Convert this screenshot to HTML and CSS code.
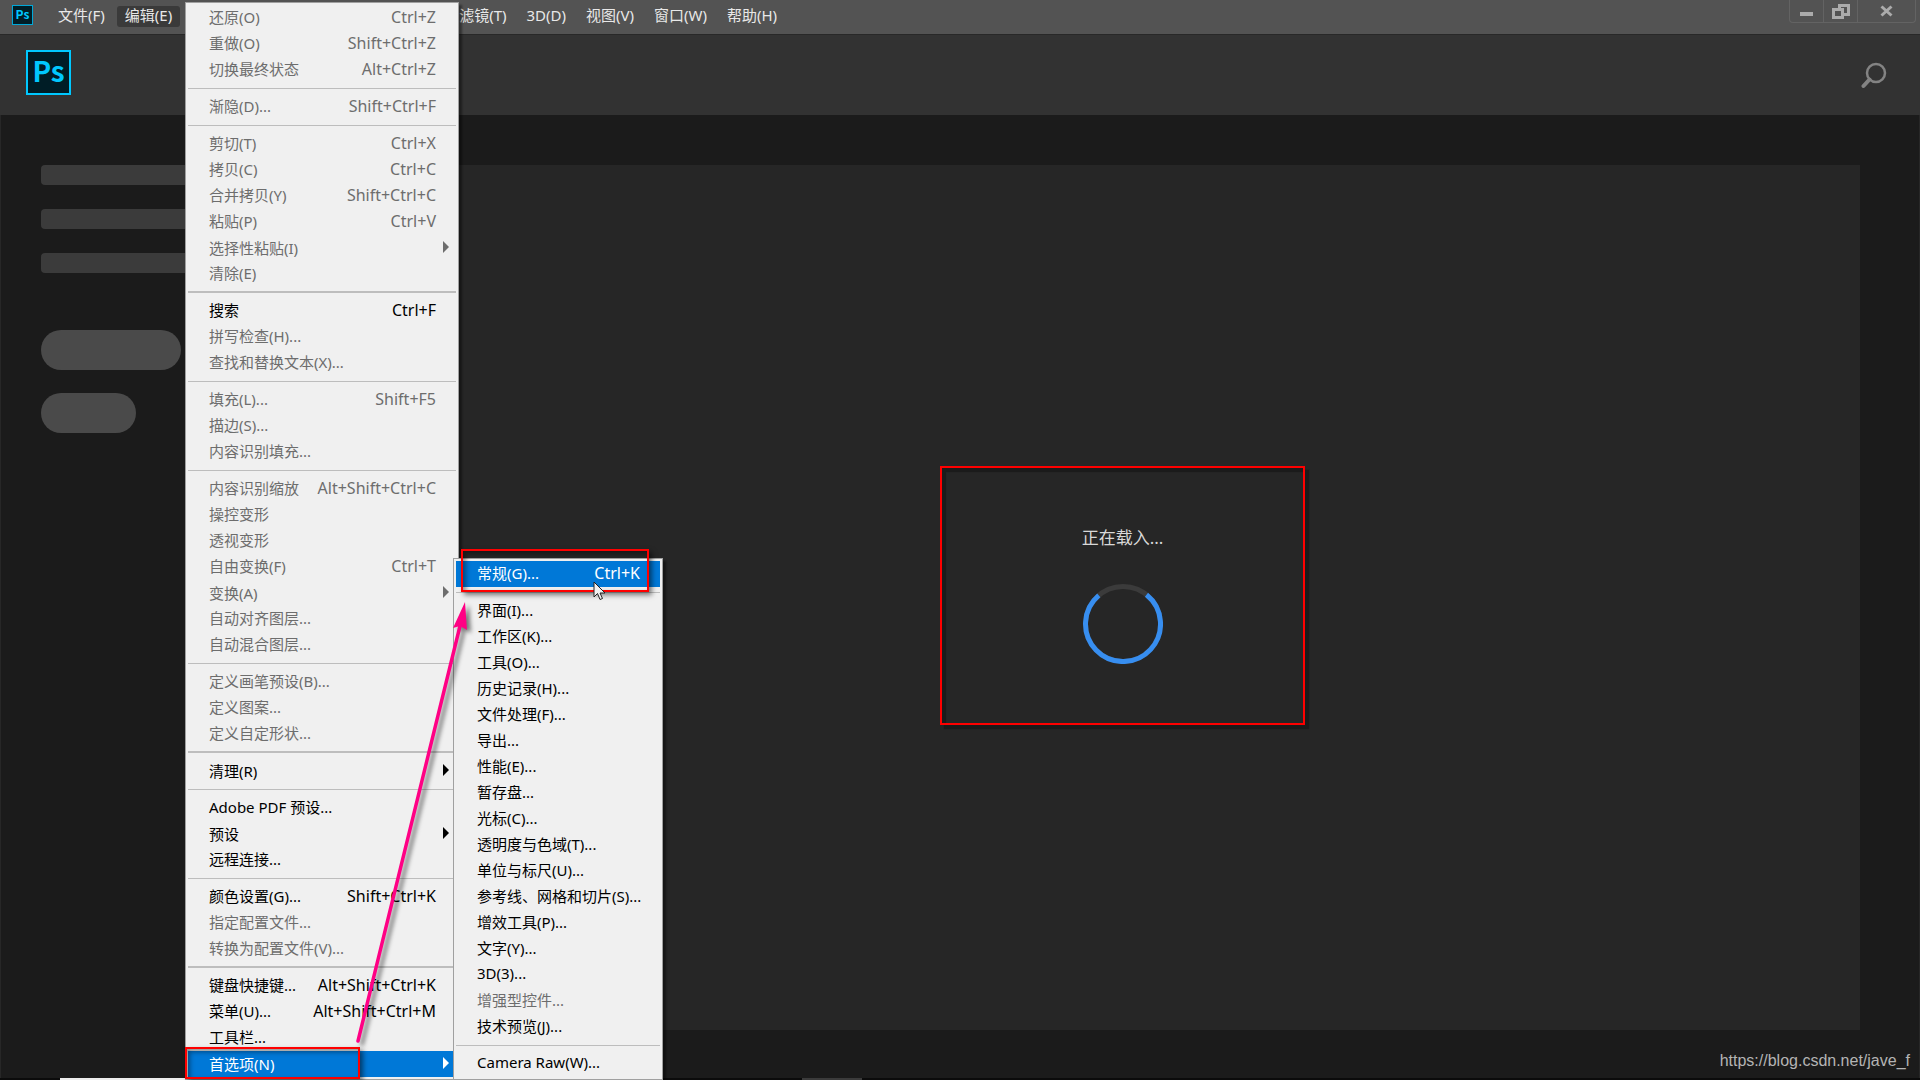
FILE: index.html
```html
<!DOCTYPE html>
<html lang="zh-CN">
<head>
    <meta charset="UTF-8">
    <title>Photoshop</title>
    <link rel="stylesheet" href="styles.css">
</head>
<body>
<div id="menubar">
    <div class="ps small">Ps</div>
    <div id="menus">
        <button>文件(F)</button>
        <button class="open">编辑(E)</button>
        <button class="next">滤镜(T)</button>
        <button>3D(D)</button>
        <button>视图(V)</button>
        <button>窗口(W)</button>
        <button>帮助(H)</button>
    </div>
    <div id="winbtns">
        <button aria-label="最小化"><svg width="14" height="18"><path d="M0 14h13" stroke="#ababab" stroke-width="4"/></svg></button>
        <button aria-label="还原"><svg width="18" height="20" fill="none" stroke="#ababab" stroke-width="3"><path d="M7.500 8V5.500h9v9h-4.500"/><path d="M1.500 9.500h9v8h-9z"/></svg></button>
        <button aria-label="关闭" class="close"><svg width="14" height="18"><path d="M1.500 6.500L11.500 15.500M11.500 6.500L1.500 15.500" stroke="#ababab" stroke-width="3"/></svg></button>
    </div>
</div>
<div id="head">
    <div class="ps">Ps</div>
    <button id="search" aria-label="搜索"><svg width="26" height="27" fill="none" stroke="#838383"><circle cx="15" cy="11" r="9" stroke-width="2.500"/><path d="M8.500 17.500L2.500 24" stroke-width="4" stroke-linecap="round"/></svg></button>
</div>
<div id="main">
    <div id="side">
        <div class="bar"></div>
        <div class="bar"></div>
        <div class="bar"></div>
        <div class="pill"></div>
        <div class="pill short"></div>
    </div>
    <div id="panel">
        <div id="loading">
            <span>正在载入...</span>
            <svg width="80" height="80" fill="none" stroke-width="5">
                <circle cx="40" cy="40" r="37.500" stroke="#3b3b3b"/>
                <path d="M63.500 10.800A37.500 37.500 0 1 1 15.800 11.400" stroke="#378ef0"/>
            </svg>
        </div>
    </div>
</div>
<div id="taskbar"><div class="light"></div><div class="gray"></div></div>

<!-- 编辑菜单 -->
<div id="edit" class="menu">
    <button disabled><span>还原(O)</span><kbd>Ctrl+Z</kbd></button>
    <button disabled><span>重做(O)</span><kbd>Shift+Ctrl+Z</kbd></button>
    <button disabled><span>切换最终状态</span><kbd>Alt+Ctrl+Z</kbd></button>
    <hr>
    <button disabled><span>渐隐(D)...</span><kbd>Shift+Ctrl+F</kbd></button>
    <hr>
    <button disabled><span>剪切(T)</span><kbd>Ctrl+X</kbd></button>
    <button disabled><span>拷贝(C)</span><kbd>Ctrl+C</kbd></button>
    <button disabled><span>合并拷贝(Y)</span><kbd>Shift+Ctrl+C</kbd></button>
    <button disabled><span>粘贴(P)</span><kbd>Ctrl+V</kbd></button>
    <button disabled class="more"><span>选择性粘贴(I)</span></button>
    <button disabled><span>清除(E)</span></button>
    <hr class="thick">
    <button><span>搜索</span><kbd>Ctrl+F</kbd></button>
    <button disabled><span>拼写检查(H)...</span></button>
    <button disabled><span>查找和替换文本(X)...</span></button>
    <hr>
    <button disabled><span>填充(L)...</span><kbd>Shift+F5</kbd></button>
    <button disabled><span>描边(S)...</span></button>
    <button disabled><span>内容识别填充...</span></button>
    <hr>
    <button disabled><span>内容识别缩放</span><kbd>Alt+Shift+Ctrl+C</kbd></button>
    <button disabled><span>操控变形</span></button>
    <button disabled><span>透视变形</span></button>
    <button disabled><span>自由变换(F)</span><kbd>Ctrl+T</kbd></button>
    <button disabled class="more"><span>变换(A)</span></button>
    <button disabled><span>自动对齐图层...</span></button>
    <button disabled><span>自动混合图层...</span></button>
    <hr>
    <button disabled><span>定义画笔预设(B)...</span></button>
    <button disabled><span>定义图案...</span></button>
    <button disabled><span>定义自定形状...</span></button>
    <hr class="thick">
    <button class="more"><span>清理(R)</span></button>
    <hr>
    <button><span>Adobe PDF 预设...</span></button>
    <button class="more"><span>预设</span></button>
    <button><span>远程连接...</span></button>
    <hr>
    <button><span>颜色设置(G)...</span><kbd>Shift+Ctrl+K</kbd></button>
    <button disabled><span>指定配置文件...</span></button>
    <button disabled><span>转换为配置文件(V)...</span></button>
    <hr class="thick">
    <button><span>键盘快捷键...</span><kbd>Alt+Shift+Ctrl+K</kbd></button>
    <button><span>菜单(U)...</span><kbd>Alt+Shift+Ctrl+M</kbd></button>
    <button><span>工具栏...</span></button>
    <button class="more active"><span>首选项(N)</span></button>
</div>

<!-- 首选项子菜单 -->
<div id="prefs" class="menu">
    <button class="active"><span>常规(G)...</span><kbd>Ctrl+K</kbd></button>
    <hr>
    <button><span>界面(I)...</span></button>
    <button><span>工作区(K)...</span></button>
    <button><span>工具(O)...</span></button>
    <button><span>历史记录(H)...</span></button>
    <button><span>文件处理(F)...</span></button>
    <button><span>导出...</span></button>
    <button><span>性能(E)...</span></button>
    <button><span>暂存盘...</span></button>
    <button><span>光标(C)...</span></button>
    <button><span>透明度与色域(T)...</span></button>
    <button><span>单位与标尺(U)...</span></button>
    <button><span>参考线、网格和切片(S)...</span></button>
    <button><span>增效工具(P)...</span></button>
    <button><span>文字(Y)...</span></button>
    <button><span>3D(3)...</span></button>
    <button disabled><span>增强型控件...</span></button>
    <button><span>技术预览(J)...</span></button>
    <hr>
    <button><span>Camera Raw(W)...</span></button>
</div>

<!-- 标注 -->
<div class="mark" id="mark1"></div>
<div class="mark" id="mark2"></div>
<svg id="arrow" width="130" height="450">
    <path d="M8 441L110 26" stroke="#ff0084" stroke-width="3.500" stroke-linecap="round"/>
    <path d="M115 2L103 28L110 26L117 30z" fill="#ff0084"/>
</svg>
<svg id="cursor" width="13" height="20"><path d="M1 1v15l3.500-3.500 2.500 6 2.500-1-2.500-5.500h5z" fill="#f0f0f0" stroke="#222"/></svg>
<a id="site" href="#">https://blog.csdn.net/jave_f</a>
</body>
</html>
```

FILE: styles.css
```css
*{
    margin: 0;
    padding: 0;
    box-sizing: border-box;
}
body {
    min-height: 100vh;
    display: flex;
    flex-direction: column;
    position: relative;
    background-color: #1b1b1b;
    font-family: "Noto Sans", "Noto Sans CJK SC", sans-serif;
    font-size: 15px;
}
button {
    border: 0;
    background: none;
    font: inherit;
    color: inherit;
    white-space: nowrap;
}
svg {
    display: block;
}
#menubar {
    height: 34px;
    display: flex;
    align-items: flex-start;
    padding-left: 12px;
    background-color: #535353;
    color: #e8e8e8;
}
.ps {
    width: 45px;
    height: 45px;
    border: 2px solid #00c8ff;
    background-color: #001d26;
    color: #00c8ff;
    font-family: "Noto Sans CJK SC", sans-serif;
    font-size: 28px;
    font-weight: bold;
    line-height: 36px;
    text-align: center;
}
.ps.small {
    width: 21px;
    height: 20px;
    margin-top: 5px;
    border: 1px solid #00a8d8;
    font-size: 12px;
    line-height: 16px;
}
#menus {
    display: flex;
    margin-top: 6px;
    margin-left: 15px;
}
#menus button {
    height: 21px;
    margin: 0 2px;
    padding: 0 8px 4px;
    line-height: 16px;
}
#menus .open {
    background-color: #3a3a3a;
    border-radius: 3px;
}
#menus .next {
    margin-left: 269px;
}
#winbtns {
    display: flex;
    height: 23px;
    margin-left: auto;
    margin-right: 4px;
    border: 1px solid #636363;
    border-top: 0;
    border-radius: 0 0 4px 4px;
}
#winbtns button {
    width: 34px;
    display: flex;
    justify-content: center;
    border-right: 1px solid #636363;
}
#winbtns .close {
    width: 57px;
    border-right: 0;
}
#head {
    height: 81px;
    display: flex;
    align-items: flex-start;
    justify-content: space-between;
    padding: 15px 33px 0 26px;
    border-top: 1px solid #282828;
    background-color: #323232;
}
#search {
    margin-top: 12px;
}
#main {
    flex: 1;
    display: flex;
    padding: 50px 59px 48px 40px;
    border-left: 1px solid #272727;
    border-right: 1px solid #272727;
}
#side {
    width: 345px;
    flex-shrink: 0;
}
.bar {
    width: 240px;
    height: 20px;
    margin-bottom: 24px;
    border-radius: 4px;
    background-color: #3b3b3b;
}
.pill {
    width: 140px;
    height: 40px;
    margin-top: 57px;
    border-radius: 20px;
    background-color: #4a4a4a;
}
.pill.short {
    width: 95px;
    margin-top: 23px;
}
#panel {
    flex: 1;
    display: flex;
    align-items: center;
    justify-content: center;
    padding: 0 1px 4px 0;
    background-color: #262626;
}
#loading {
    width: 365px;
    height: 259px;
    display: flex;
    flex-direction: column;
    align-items: center;
    padding-top: 57px;
    border: 2px solid #f00;
    box-shadow: 4px 4px 1px #1b1b1b, inset 4px 4px 1px #1b1b1b;
    color: #d8d8d8;
    font-size: 17px;
    line-height: 26px;
}
#loading svg {
    margin-top: 33px;
}
#taskbar {
    height: 2px;
    display: flex;
    padding-left: 60px;
    background-color: #0b0b0b;
}
#taskbar .light {
    width: 320px;
    background-color: #eee;
}
#taskbar .gray {
    width: 60px;
    margin-left: 422px;
    background-color: #3b3b3b;
}
.menu {
    position: absolute;
    padding: 2px;
    border: 1px solid #a0a0a0;
    background-color: #f0f0f0;
    box-shadow: 3px 3px 2px rgba(0,0,0,0.4);
}
#edit {
    left: 185px;
    top: 2px;
    width: 274px;
}
#prefs {
    left: 453px;
    top: 558px;
    width: 210px;
}
.menu button {
    position: relative;
    width: 100%;
    height: 26px;
    display: flex;
    align-items: center;
    justify-content: space-between;
    padding: 0 20px 2px 21px;
    color: #000;
}
.menu button:disabled {
    color: #6d6d6d;
}
.menu span {
    padding-bottom: 2px;
}
.menu kbd {
    font-family: inherit;
    font-size: 16px;
}
.menu .active {
    background-color: #0078d7;
    color: #fff;
}
.menu .more {
    padding-top: 1px;
    padding-bottom: 0;
}
.menu .more::after {
    content: "";
    position: absolute;
    right: 7px;
    top: 6px;
    border: 6px solid transparent;
    border-left-color: currentColor;
    border-right: 0;
}
.menu hr {
    height: 1px;
    margin: 5px 0;
    border: 0;
    background-color: #bdbdbd;
}
.menu .thick {
    height: 2px;
    margin-top: 4px;
}
.mark {
    position: absolute;
    border: 2px solid #f00;
    box-shadow: 3px 3px 5px rgba(0,0,0,0.5), inset 3px 3px 5px rgba(0,0,0,0.4);
    pointer-events: none;
}
#mark1 {
    left: 461px;
    top: 549px;
    width: 188px;
    height: 43px;
}
#mark2 {
    left: 185px;
    top: 1047px;
    width: 175px;
    height: 32px;
}
#arrow {
    position: absolute;
    left: 350px;
    top: 600px;
    filter: drop-shadow(4px 3px 2px rgba(0,0,0,0.5));
    pointer-events: none;
}
#cursor {
    position: absolute;
    left: 593px;
    top: 581px;
}
#site {
    position: absolute;
    right: 10px;
    bottom: 10px;
    color: #b4b4b4;
    font-family: "Liberation Sans", sans-serif;
    font-size: 16px;
    text-decoration: none;
}
```
